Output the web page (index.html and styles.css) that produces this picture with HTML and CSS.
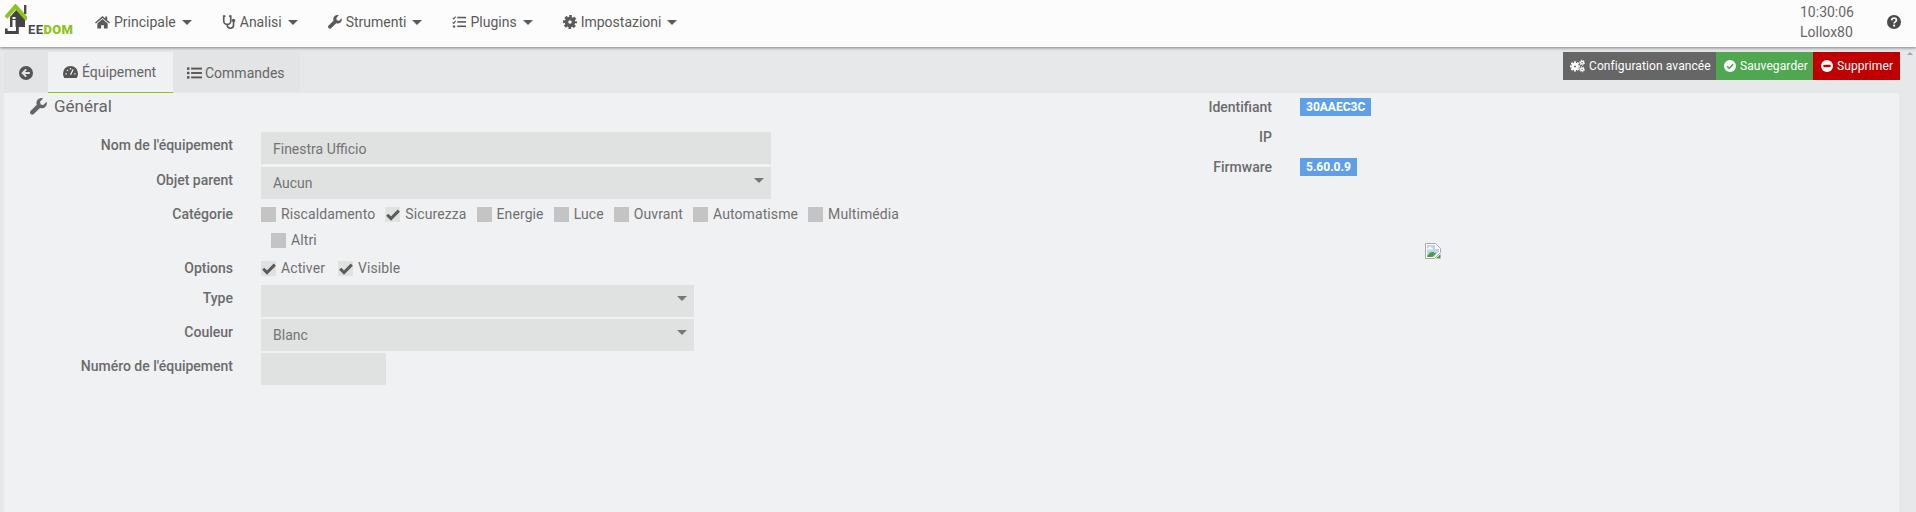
FILE: index.html
```html
<!DOCTYPE html>
<html lang="en">
<head>
    <meta charset="UTF-8">
    <meta name="viewport" content="width=device-width, initial-scale=1.0">
    <title>Jeedom - Équipement</title>
    <link rel="stylesheet" href="styles.css">
</head>
<body>
    <svg class="icon-defs" aria-hidden="true">
        <defs>
            <symbol id="i-home" viewBox="0 0 16 14">
                <path d="M8 .6 0 7.5l1 1.1L8 2.6l7 6 1-1.1-3-2.6V1h-2v2.3z"/>
                <path d="M8 3.8 2.5 8.5V14h4v-3.6h3V14h4V8.5z"/>
            </symbol>
            <symbol id="i-stetho" viewBox="0 0 16 16">
                <path d="M4 1.2H2v5.600a4 4 0 0 0 8 0V1.200H8M6 10.700v.8a3.600 3.600 0 0 0 7.200 0V8" fill="none" stroke="currentColor" stroke-width="1.900"/>
                <circle cx="13.200" cy="6.300" r="2"/>
            </symbol>
            <symbol id="i-wrench" viewBox="0 0 16 16">
                <path d="M15.600 3.600 12.700 6.500 10 6 9.500 3.300 12.400.4a4.600 4.600 0 0 0-6 6L.7 12.100a2 2 0 0 0 2.900 2.900l5.800-5.700a4.600 4.600 0 0 0 6.200-5.700z"/>
            </symbol>
            <symbol id="i-tasks" viewBox="0 0 16 14">
                <path d="M.8 2.300 2 3.500 4.200.8M.8 7.300 2 8.500l2.200-2.700" fill="none" stroke="currentColor" stroke-width="1.300"/>
                <rect x="1" y="11" width="2.600" height="2.400"/>
                <rect x="6" y="1" width="10" height="1.800"/>
                <rect x="6" y="6" width="10" height="1.800"/>
                <rect x="6" y="11" width="10" height="1.800"/>
            </symbol>
            <symbol id="i-cog" viewBox="0 0 16 16">
                <circle cx="8" cy="8" r="4" fill="none" stroke="currentColor" stroke-width="4"/>
                <circle cx="8" cy="8" r="6.600" fill="none" stroke="currentColor" stroke-width="2.800" pathLength="16" stroke-dasharray="1.200 .8" stroke-dashoffset=".6"/>
            </symbol>
            <symbol id="i-cogs" viewBox="0 0 18 15">
                <circle cx="6" cy="8" r="2.800" fill="none" stroke="currentColor" stroke-width="3.200"/>
                <circle cx="6" cy="8" r="5" fill="none" stroke="currentColor" stroke-width="2.200" pathLength="16" stroke-dasharray="1.200 .8" stroke-dashoffset=".6"/>
                <circle cx="14.500" cy="3.500" r="1.700" fill="none" stroke="currentColor" stroke-width="1.700"/>
                <circle cx="14.500" cy="3.500" r="3" fill="none" stroke="currentColor" stroke-width="1.200" pathLength="12" stroke-dasharray="1 1"/>
                <circle cx="14.500" cy="11.500" r="1.700" fill="none" stroke="currentColor" stroke-width="1.700"/>
                <circle cx="14.500" cy="11.500" r="3" fill="none" stroke="currentColor" stroke-width="1.200" pathLength="12" stroke-dasharray="1 1"/>
            </symbol>
            <symbol id="i-gauge" viewBox="0 0 16 13">
                <path d="M8 0a8 8 0 0 0-8 8c0 1.800.5 3.500 1.400 5h13.200c.9-1.500 1.400-3.200 1.400-5a8 8 0 0 0-8-8z"/>
                <path d="M8 9.500 10.800 3.800M2.500 8.500h1.600M4.300 4.300l1 1M8 2.200v1.600M11.900 8.500h1.600" fill="none" stroke="var(--cut)" stroke-width="1.400"/>
            </symbol>
            <symbol id="i-list" viewBox="0 0 16 13">
                <rect x="0" y=".5" width="2.600" height="2.600"/>
                <rect x="0" y="5.200" width="2.600" height="2.600"/>
                <rect x="0" y="9.900" width="2.600" height="2.600"/>
                <rect x="4.400" y=".8" width="11.600" height="2"/>
                <rect x="4.400" y="5.500" width="11.600" height="2"/>
                <rect x="4.400" y="10.200" width="11.600" height="2"/>
            </symbol>
            <symbol id="i-back" viewBox="0 0 14 14">
                <circle cx="7" cy="7" r="7"/>
                <path d="M7.200 3.300 3.600 7l3.600 3.700M3.900 7h6.900" fill="none" stroke="var(--cut)" stroke-width="1.900"/>
            </symbol>
            <symbol id="i-help" viewBox="0 0 14 14">
                <circle cx="7" cy="7" r="7"/>
                <path d="M4.600 5.300C4.800 3.900 5.800 3.200 7 3.200c1.400 0 2.400.8 2.400 2 0 1.700-2.300 1.600-2.300 3.300" fill="none" stroke="var(--cut)" stroke-width="1.700"/>
                <rect x="6.100" y="9.600" width="2" height="1.900" style="fill:var(--cut)"/>
            </symbol>
            <symbol id="i-ok" viewBox="0 0 12 12">
                <circle cx="6" cy="6" r="6"/>
                <path d="M3 6.200 5.200 8.400 9.100 4.200" fill="none" stroke="var(--cut)" stroke-width="1.600"/>
            </symbol>
            <symbol id="i-minus" viewBox="0 0 12 12">
                <circle cx="6" cy="6" r="6"/>
                <rect x="2.400" y="4.800" width="7.200" height="2.400" style="fill:var(--cut)"/>
            </symbol>
            <symbol id="i-check" viewBox="0 0 14 12">
                <path d="M1.200 5.800 5 9.600 12.800 1.600" fill="none" stroke="currentColor" stroke-width="3"/>
            </symbol>
        </defs>
    </svg>

    <header class="navbar">
        <a class="brand">
            <svg class="brand-logo" viewBox="0 0 22 30">
                <rect x="19" y="1" width="2.400" height="9" fill="#4a4a4a"/>
                <path d="M5 13v10h15V13L12 5z" fill="#454545"/>
                <path d="M1 13.500 10.500 2.500 22 15.500" fill="none" stroke="#8fc31f" stroke-width="4"/>
                <path d="M7.500 13h3v2h-3zM7.500 16h3v8h-3z" fill="#fff"/>
                <path d="M1.200 24.500v4h11.200V22" fill="none" stroke="#454545" stroke-width="2.800"/>
            </svg>
            <span class="brand-text">EE<b>DOM</b></span>
        </a>
        <nav class="menu">
            <a class="menu-item"><svg class="ico ico-w15"><use href="#i-home"/></svg>Principale<span class="caret"></span></a>
            <a class="menu-item"><svg class="ico"><use href="#i-stetho"/></svg>Analisi<span class="caret"></span></a>
            <a class="menu-item"><svg class="ico"><use href="#i-wrench"/></svg>Strumenti<span class="caret"></span></a>
            <a class="menu-item"><svg class="ico"><use href="#i-tasks"/></svg>Plugins<span class="caret"></span></a>
            <a class="menu-item"><svg class="ico"><use href="#i-cog"/></svg>Impostazioni<span class="caret"></span></a>
        </nav>
        <div class="user-info">
            <span>10:30:06</span>
            <span>Lollox80</span>
        </div>
        <svg class="help ico"><use href="#i-help"/></svg>
    </header>

    <main class="page">
        <div class="tab-bar">
            <ul class="tabs">
                <li class="tab tab-back"><svg class="ico"><use href="#i-back"/></svg></li>
                <li class="tab active"><svg class="ico ico-w15"><use href="#i-gauge"/></svg>Équipement</li>
                <li class="tab tab-cmd"><svg class="ico ico-w15"><use href="#i-list"/></svg>Commandes</li>
            </ul>
            <div class="actions">
                <a class="btn btn-config"><svg class="ico ico-w15"><use href="#i-cogs"/></svg>Configuration avancée</a>
                <a class="btn btn-save"><svg class="ico ico-w12"><use href="#i-ok"/></svg>Sauvegarder</a>
                <a class="btn btn-delete"><svg class="ico ico-w12"><use href="#i-minus"/></svg>Supprimer</a>
            </div>
        </div>

        <section class="content">
            <form class="col-left">
                <h3 class="legend"><svg class="ico ico-w17"><use href="#i-wrench"/></svg>Général</h3>

                <div class="form-row row-tight">
                    <label>Nom de l'équipement</label>
                    <input class="field field-lg" type="text" value="Finestra Ufficio">
                </div>
                <div class="form-row row-cat">
                    <label>Objet parent</label>
                    <div class="select-wrap field-lg"><select class="field"><option>Aucun</option></select></div>
                </div>
                <div class="form-row row-opt">
                    <label class="label-check">Catégorie</label>
                    <div class="checks">
                        <span class="check"><i class="box"></i>Riscaldamento</span>
                        <span class="check"><i class="box on"><svg><use href="#i-check"/></svg></i>Sicurezza</span>
                        <span class="check"><i class="box"></i>Energie</span>
                        <span class="check"><i class="box"></i>Luce</span>
                        <span class="check"><i class="box"></i>Ouvrant</span>
                        <span class="check"><i class="box"></i>Automatisme</span>
                        <span class="check"><i class="box"></i>Multimédia</span>
                        <span class="check"><i class="box"></i>Altri</span>
                    </div>
                </div>
                <div class="form-row row-type">
                    <label class="label-check">Options</label>
                    <div class="checks">
                        <span class="check"><i class="box on"><svg><use href="#i-check"/></svg></i>Activer</span>
                        <span class="check"><i class="box on"><svg><use href="#i-check"/></svg></i>Visible</span>
                    </div>
                </div>
                <div class="form-row row-narrow">
                    <label>Type</label>
                    <div class="select-wrap field-md"><select class="field"><option></option></select></div>
                </div>
                <div class="form-row row-narrow">
                    <label>Couleur</label>
                    <div class="select-wrap field-md"><select class="field"><option>Blanc</option></select></div>
                </div>
                <div class="form-row">
                    <label>Numéro de l'équipement</label>
                    <input class="field field-sm" type="text">
                </div>
            </form>

            <aside class="col-right">
                <div class="info-row"><label>Identifiant</label><span class="badge">30AAEC3C</span></div>
                <div class="info-row"><label>IP</label></div>
                <div class="info-row"><label>Firmware</label><span class="badge">5.60.0.9</span></div>
                <svg class="broken-img" viewBox="0 0 16 16">
                    <path d="M.5 15.500V.5h10l5 5v4l-6 6z" fill="#fff" stroke="#a9a9a9"/>
                    <path d="M2 2h8v4h4v3l-5.500 5H2z" fill="#bcd3f3"/>
                    <path d="M3.500 5a1.500 1.500 0 0 1 3 0h1v1.500h-5V5z" fill="#fff"/>
                    <path d="M2 14c1.500-3.500 4-5.500 6-5l3 1.500L7.500 14z" fill="#4f9d3a"/>
                    <path d="M11 15.500 15.500 11v4.500z" fill="#4f9d3a"/>
                </svg>
            </aside>
        </section>
        <span class="scroll-up"></span>
    </main>
</body>
</html>
```

FILE: styles.css
```css
* {
    box-sizing: border-box;
}

body {
    font-family: Roboto, "Liberation Sans", sans-serif;
    font-size: 14px;
    color: #666;
    background-color: #e7e8ea;
    margin: 0;
    height: 100vh;
    overflow: hidden;
    display: flex;
    flex-direction: column;
}

.icon-defs {
    display: none;
}

.ico {
    width: 14px;
    height: 14px;
    fill: currentColor;
    flex: none;
    --cut: #fcfcfc;
}

.ico-w12 {
    width: 12px;
    height: 12px;
}

.ico-w15 {
    width: 15px;
    height: 14px;
}

.ico-w17 {
    width: 17px;
    height: 17px;
}

/* top bar */
.navbar {
    height: 47px;
    background-color: #fcfcfc;
    box-shadow: 0 1px 3px rgba(0, 0, 0, 0.45);
    display: flex;
    align-items: center;
    flex: none;
    position: relative;
    color: #5a5a5a;
}

.brand {
    width: 95px;
    height: 47px;
    padding: 4px 0 13px 5px;
    display: flex;
    align-items: flex-end;
    flex: none;
}

.brand-logo {
    width: 22px;
    height: 30px;
    flex: none;
}

.brand-text {
    margin-left: 1px;
    font-size: 13px;
    font-weight: 700;
    line-height: 9px;
    letter-spacing: 0.4px;
    color: #4a4a4a;
}

.brand-text b {
    color: #8fc31f;
}

.menu {
    display: flex;
    gap: 30px;
    padding-bottom: 3px;
}

.menu-item {
    display: flex;
    align-items: center;
    gap: 4px;
}

.caret {
    width: 0;
    height: 0;
    margin-left: 2px;
    border-left: 5px solid transparent;
    border-right: 5px solid transparent;
    border-top: 5px solid #5a5a5a;
}

.user-info {
    margin-left: auto;
    width: 54px;
    display: flex;
    flex-direction: column;
    gap: 0;
    line-height: 20px;
    padding-bottom: 3px;
    color: #666;
}

.help {
    margin: 0 15px 3px 33px;
    color: #4a4a4a;
}

/* tabs and buttons */
.page {
    flex: 1;
    min-height: 0;
    padding: 5px 17px 0 4px;
    display: flex;
    flex-direction: column;
    position: relative;
}

.tab-bar {
    display: flex;
    justify-content: space-between;
    align-items: flex-start;
    height: 41px;
    flex: none;
}

.tabs {
    display: flex;
    list-style: none;
    margin: 0;
    padding: 0;
    height: 41px;
}

.tab {
    display: flex;
    align-items: center;
    gap: 4px;
    padding: 0 16px 0 14px;
    background-color: #e3e4e5;
    color: #666;
}

.tab .ico {
    --cut: #e3e4e5;
    color: #555;
}

.tab-back {
    width: 44px;
    padding: 0 0 0 15px;
}

.tab.active {
    width: 125px;
    padding-left: 15px;
    background-color: #f0f1f3;
    border-bottom: 1px solid #93c01f;
}

.tab.active .ico {
    --cut: #f0f1f3;
}

.tab-cmd {
    width: 127px;
    gap: 3px;
}

.actions {
    display: flex;
    margin-right: -1px;
}

.btn {
    height: 28px;
    display: flex;
    align-items: center;
    gap: 4px;
    font-size: 12px;
    letter-spacing: 0.1px;
    white-space: nowrap;
    color: #fff;
    padding: 0 0 0 8px;
}

.btn-config {
    width: 153px;
    background-color: #666;
    padding-left: 7px;
}

.btn-config .ico {
    --cut: #666;
}

.btn-save {
    width: 97px;
    background-color: #4fa84f;
}

.btn-save .ico {
    --cut: #4fa84f;
}

.btn-delete {
    width: 87px;
    background-color: #c00000;
}

.btn-delete .ico {
    --cut: #c00000;
}

.scroll-up {
    position: absolute;
    top: 5px;
    right: 3px;
    border-left: 3px solid transparent;
    border-right: 3px solid transparent;
    border-bottom: 3px solid #a8a8a8;
}

/* form */
.content {
    flex: 1;
    background-color: #f0f1f3;
    display: flex;
    min-height: 0;
}

.col-left {
    width: 1176px;
    flex: none;
}

.legend {
    margin: 0;
    height: 39px;
    padding: 5px 0 0 26px;
    display: flex;
    align-items: flex-start;
    gap: 7px;
    font-size: 17px;
    font-weight: 400;
    line-height: 16px;
    color: #666;
}

.form-row {
    display: flex;
    align-items: flex-start;
}

.row-tight {
    margin-bottom: 3px;
}

.row-cat {
    margin-bottom: 8px;
}

.row-opt {
    margin-bottom: 13px;
}

.row-type {
    margin-bottom: 9px;
}

.row-narrow {
    margin-bottom: 2px;
}

label {
    font-weight: 500;
    color: #6b6b6b;
    line-height: 20px;
    text-align: right;
}

.form-row label {
    width: 229px;
    margin-right: 28px;
    padding-top: 3px;
    flex: none;
}

.form-row .label-check {
    padding-top: 0;
    line-height: 15px;
}

.field {
    display: block;
    width: 100%;
    height: 32px;
    border: none;
    border-radius: 0;
    outline: none;
    background-color: #e0e2e1;
    font-family: inherit;
    font-size: 14px;
    color: #737373;
    padding: 2px 12px 0;
    appearance: none;
}

select.field {
    padding-top: 0;
}

.field-lg {
    width: 510px;
}

.field-md {
    width: 433px;
}

.field-sm {
    width: 125px;
}

.select-wrap {
    position: relative;
}

.select-wrap::after {
    content: "";
    position: absolute;
    top: 11px;
    right: 7px;
    border-left: 5px solid transparent;
    border-right: 5px solid transparent;
    border-top: 5px solid #777;
}

.checks {
    width: 660px;
    display: flex;
    flex-wrap: wrap;
    row-gap: 11px;
}

.check {
    display: flex;
    align-items: center;
    gap: 5px;
    height: 15px;
    line-height: 15px;
    letter-spacing: 0.1px;
    color: #707070;
    margin-left: 10px;
}

.check:first-child {
    margin-left: 0;
}

.row-type .check {
    margin-left: 13px;
}

.row-type .check:first-child {
    margin-left: 0;
}

.box {
    width: 15px;
    height: 15px;
    background-color: #c4c4c4;
    display: flex;
    align-items: center;
    justify-content: center;
}

.box.on {
    background-color: #e0e2e1;
    color: #5a5a5a;
}

.box svg {
    width: 14px;
    height: 12px;
}

/* right column */
.col-right {
    padding-top: 5px;
}

.info-row {
    display: flex;
    align-items: center;
    height: 18px;
    margin-bottom: 12px;
}

.info-row label {
    width: 92px;
    margin-right: 28px;
}

.badge {
    height: 18px;
    padding: 0 6px;
    background-color: #5e9fe8;
    color: #fff;
    font-size: 12px;
    font-weight: 700;
    line-height: 18px;
}

.broken-img {
    display: block;
    width: 16px;
    height: 16px;
    margin: 67px 0 0 245px;
}
```
